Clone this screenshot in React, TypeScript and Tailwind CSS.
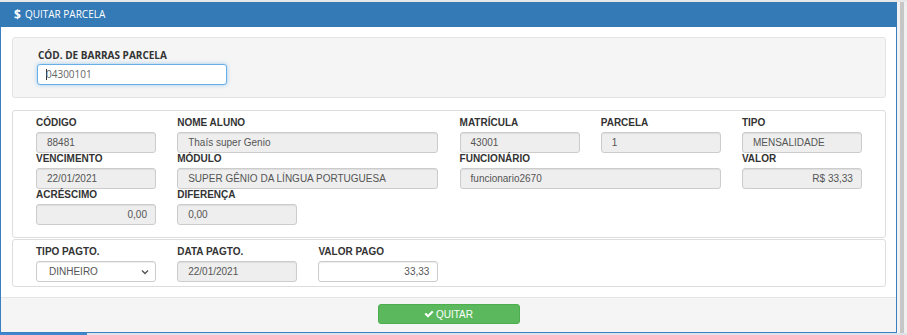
import React from "react";

const lab = "block h-[12px] leading-[12px] text-[10px] font-bold text-[#333] mb-[3px] whitespace-nowrap";
const inpGray =
  "h-[21px] border border-[#cccccc] bg-[#eeeeee] rounded-[3px] flex items-center px-[10px] text-[10px] text-[#555] whitespace-nowrap shadow-[inset_0_1px_1px_rgba(0,0,0,0.075)]";
const inpWhite =
  "h-[21px] border border-[#cccccc] bg-white rounded-[3px] flex items-center px-[10px] text-[10px] text-[#555] whitespace-nowrap shadow-[inset_0_1px_1px_rgba(0,0,0,0.075)]";

function Field({
  label,
  value,
  span2,
  right,
  col,
}: {
  label: string;
  value: string;
  span2?: boolean;
  right?: boolean;
  col: string;
}) {
  return (
    <div className={col}>
      <span className={lab}>{label}</span>
      <div className={`${inpGray} ${span2 ? "w-[261px]" : "w-[120px]"} ${right ? "justify-end pr-[8px]" : ""}`}>
        {value}
      </div>
    </div>
  );
}

export default function App() {
  return (
    <div
      className="w-[907px] h-[335px] bg-[#eceef0] overflow-hidden flex flex-col"
      style={{ fontFamily: '"Liberation Sans", Arial, sans-serif' }}
    >
      <div className="h-[2px] bg-[#e6e8ea]" />
      <div className="flex">
        <div className="w-[897px] h-[331px] bg-white border-x border-b border-[#3a7fc1] flex flex-col">
          {/* Header */}
          <div
            className="h-[25px] bg-[#337ab7] flex items-center pl-[14px] text-white text-[10px] -mx-px"
            style={{ fontFamily: '"Open Sans", sans-serif' }}
          >
            <span className="font-bold text-[12px] leading-none mr-[4px]">$</span>
            <span>QUITAR PARCELA</span>
          </div>

          {/* Body */}
          <div className="pt-[10px] pl-[11px] pr-[10px]">
            {/* Panel 1 */}
            <div className="h-[61px] bg-[#f5f5f5] border border-[#e3e3e3] rounded-[3px] pt-[11px] pl-[24px]">
              <span
                className="block h-[12px] leading-[12px] text-[10px] font-bold text-[#333] ml-[1px] mb-[3px]"
                style={{ fontFamily: '"Open Sans", sans-serif' }}
              >
                CÓD. DE BARRAS PARCELA
              </span>
              <div
                className="w-[190px] h-[21px] bg-white border border-[#66afe9] rounded-[3px] flex items-center pl-[8px] text-[10px] text-[#666] shadow-[0_0_4px_rgba(102,175,233,0.6)]"
                style={{ fontFamily: '"Open Sans", sans-serif' }}
              >
                <span className="inline-block w-px h-[11px] bg-[#333] -mr-px" />
                04300101
              </div>
            </div>

            {/* Panel 2 */}
            <div className="mt-[12px] h-[128px] border border-[#dddddd] rounded-[3px] pt-[6px] pl-[23px]">
              <div className="grid grid-cols-[repeat(6,141.2px)] grid-rows-[repeat(3,36px)]">
                <Field col="col-start-1 row-start-1" label="CÓDIGO" value="88481" />
                <Field col="col-start-2 col-span-2 row-start-1" label="NOME ALUNO" value="Thaís super Genio" span2 />
                <Field col="col-start-4 row-start-1" label="MATRÍCULA" value="43001" />
                <Field col="col-start-5 row-start-1" label="PARCELA" value="1" />
                <Field col="col-start-6 row-start-1" label="TIPO" value="MENSALIDADE" />
                <Field col="col-start-1 row-start-2" label="VENCIMENTO" value="22/01/2021" />
                <Field
                  col="col-start-2 col-span-2 row-start-2"
                  label="MÓDULO"
                  value="SUPER GÊNIO DA LÍNGUA PORTUGUESA"
                  span2
                />
                <Field col="col-start-4 col-span-2 row-start-2" label="FUNCIONÁRIO" value="funcionario2670" span2 />
                <Field col="col-start-6 row-start-2" label="VALOR" value="R$ 33,33" right />
                <Field col="col-start-1 row-start-3" label="ACRÉSCIMO" value="0,00" right />
                <Field col="col-start-2 row-start-3" label="DIFERENÇA" value="0,00" />
              </div>
            </div>

            {/* Panel 3 */}
            <div className="mt-px h-[48px] border border-[#dddddd] rounded-[3px] pt-[6px] pl-[23px]">
              <div className="grid grid-cols-[repeat(6,141.2px)]">
                <div>
                  <span className={lab}>TIPO PAGTO.</span>
                  <div className={`${inpWhite} w-[120px] justify-between pl-[12px] pr-[6px]`}>
                    <span>DINHEIRO</span>
                    <svg width="8" height="6" viewBox="0 0 8 6" className="mt-px">
                      <path d="M1 1.5 L4 4.5 L7 1.5" fill="none" stroke="#555" strokeWidth="1.4" />
                    </svg>
                  </div>
                </div>
                <div>
                  <span className={lab}>DATA PAGTO.</span>
                  <div className={`${inpGray} w-[120px]`}>22/01/2021</div>
                </div>
                <div>
                  <span className={lab}>VALOR PAGO</span>
                  <div className={`${inpWhite} w-[120px] justify-end pr-[8px]`}>33,33</div>
                </div>
              </div>
            </div>
          </div>

          {/* Footer */}
          <div className="mt-[10px] flex-1 bg-[#f5f5f5] border-t border-[#e5e5e5] pt-[6px] flex justify-center">
            <div className="w-[142px] h-[20px] bg-[#5cb85c] border border-[#4cae4c] rounded-[3px] flex items-center justify-center text-white text-[10px]">
              <svg width="10" height="10" viewBox="0 0 1792 1792" className="mr-[2px]">
                <path
                  fill="#fff"
                  d="M1671 566q0 40-28 68l-724 724-136 136q-28 28-68 28t-68-28l-136-136-362-362q-28-28-28-68t28-68l136-136q28-28 68-28t68 28l294 295 656-657q28-28 68-28t68 28l136 136q28 28 28 68z"
                />
              </svg>
              <span>QUITAR</span>
            </div>
          </div>
        </div>
        {/* right strip */}
        <div className="flex h-[331px]">
          <div className="w-[3px] bg-[#f2f2f2]" />
          <div className="w-[4px] bg-[#c6c6c6]" />
          <div className="w-[3px] bg-[#efefef]" />
        </div>
      </div>
      <div className="flex h-[2px]">
        <div className="w-[87px] bg-[#3f86cf]" />
        <div className="flex-1 bg-[#dde4ec]" />
      </div>
    </div>
  );
}
